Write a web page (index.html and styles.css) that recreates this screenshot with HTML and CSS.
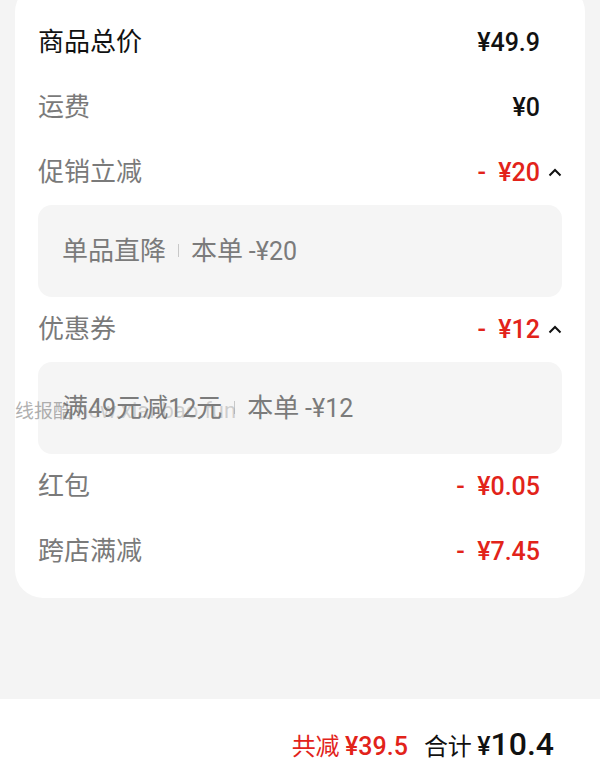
FILE: index.html
```html
<!DOCTYPE html>
<html lang="zh-CN">
<head>
    <meta charset="UTF-8">
    <meta name="viewport" content="width=device-width, initial-scale=1.0">
    <title>订单金额明细</title>
    <link rel="stylesheet" href="styles.css">
</head>
<body>

    <div class="page">
        <div class="card">
            <div class="row">
                <span class="label strong">商品总价</span>
                <span class="val">¥49.9</span>
            </div>
            <div class="row">
                <span class="label">运费</span>
                <span class="val">¥0</span>
            </div>
            <div class="row">
                <span class="label">促销立减</span>
                <span class="val red with-arrow">-&nbsp;&nbsp;¥20</span>
                <svg class="arrow" width="14" height="9" viewBox="0 0 14 9"><path d="M1.5 7.5 L7 2 L12.5 7.5" fill="none" stroke="#111" stroke-width="2"/></svg>
            </div>
            <div class="detail">
                <span>单品直降</span>
                <i class="sep"></i>
                <span>本单 <em class="num">-¥20</em></span>
            </div>
            <div class="row">
                <span class="label">优惠券</span>
                <span class="val red with-arrow">-&nbsp;&nbsp;¥12</span>
                <svg class="arrow" width="14" height="9" viewBox="0 0 14 9"><path d="M1.5 7.5 L7 2 L12.5 7.5" fill="none" stroke="#111" stroke-width="2"/></svg>
            </div>
            <div class="detail">
                <span>满<em class="num">49</em>元减<em class="num">12</em>元</span>
                <i class="sep"></i>
                <span>本单 <em class="num">-¥12</em></span>
            </div>
            <div class="row">
                <span class="label">红包</span>
                <span class="val red">-&nbsp;&nbsp;¥0.05</span>
            </div>
            <div class="row">
                <span class="label">跨店满减</span>
                <span class="val red">-&nbsp;&nbsp;¥7.45</span>
            </div>

            <div class="watermark">线报酷 <span>new.xianbao.fun</span></div>
        </div>
    </div>

    <footer class="bar">
        <span class="saved">共减 <b>¥39.5</b></span>
        <span class="total">合计 <b>¥<big>10.4</big></b></span>
    </footer>

</body>
</html>
```

FILE: styles.css
```css
body {
    margin: 0;
    padding: 0;
    background-color: #f4f4f4;
    font-family: "Noto Sans CJK SC", "Noto Sans", sans-serif;
    width: 600px;
    height: 783px;
    overflow: hidden;
    display: flex;
    flex-direction: column;
}

.page {
    flex: 1;
}

.card {
    position: relative;
    margin: -16px 15px 0;
    padding: 26px 0 14px;
    background-color: #fff;
    border-radius: 28px;
}

.row {
    display: flex;
    align-items: center;
    height: 65px;
    padding: 0 23px;
}

.label {
    flex: 1;
    font-size: 26px;
    color: #7a7a7a;
    margin-top: -6px;
}

.label.strong {
    color: #111;
}

.val {
    font-family: Roboto, "Noto Sans CJK SC", sans-serif;
    font-weight: 500;
    font-size: 25px;
    color: #111;
    margin-right: 22px;
}

.val.red {
    color: #e2231a;
}

.val.with-arrow {
    margin-right: 8px;
}

.arrow {
    display: block;
}

.detail {
    display: flex;
    align-items: center;
    height: 92px;
    margin: 0 23px;
    padding: 0 24px 5px;
    box-sizing: border-box;
    background-color: #f5f5f5;
    border-radius: 14px;
    font-size: 26px;
    color: #7b7b7b;
}

.num {
    font-style: normal;
    font-family: Roboto, sans-serif;
    font-size: 25px;
}

.sep {
    width: 1px;
    height: 13px;
    margin: 3px 12px 0;
    background-color: #c8c8c8;
}

.watermark {
    position: absolute;
    left: 0;
    top: 412px;
    font-size: 19px;
    color: rgba(110, 110, 110, 0.55);
    pointer-events: none;
}

.watermark span {
    font-family: Roboto, sans-serif;
    font-size: 22px;
    color: rgba(130, 130, 130, 0.35);
}

.bar {
    height: 84px;
    background-color: #fff;
    display: flex;
    justify-content: flex-end;
    align-items: center;
    padding: 6px 46px 0 0;
    box-sizing: border-box;
    gap: 16px;
}

.saved {
    font-size: 24px;
    color: #e2231a;
}

.saved b,
.total b {
    font-family: Roboto, sans-serif;
    font-weight: 500;
    font-size: 25px;
}

.total {
    font-size: 24px;
    color: #111;
}

.total big {
    font-size: 32px;
}
```
